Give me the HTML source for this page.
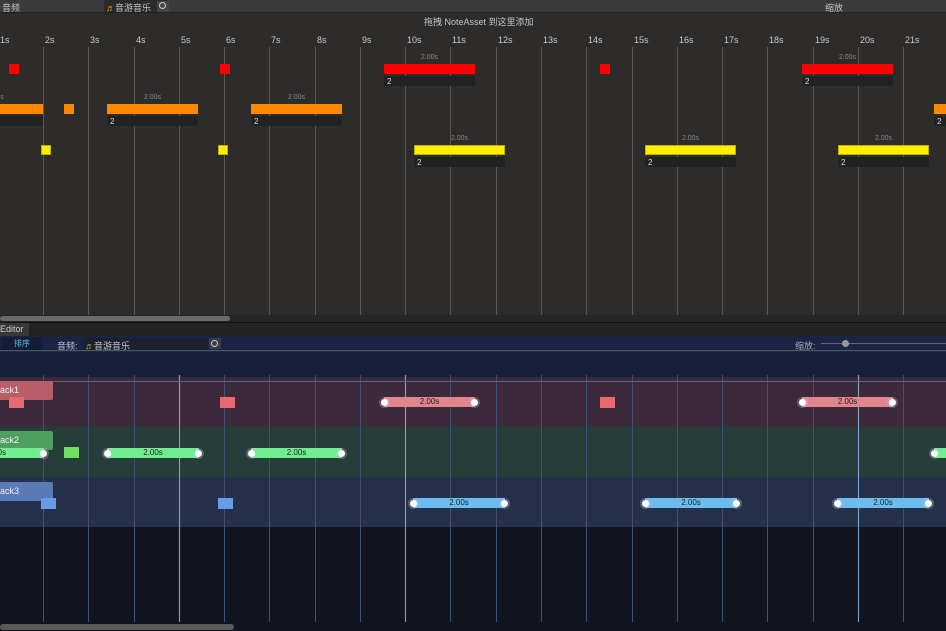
<!DOCTYPE html>
<html><head><meta charset="utf-8"><style>
*{margin:0;padding:0;box-sizing:border-box}
body{width:946px;height:631px;overflow:hidden;background:#2b2b2b;font-family:"Liberation Sans","Noto Sans CJK SC",sans-serif;position:relative;color:#c8c8c8}
.a{position:absolute}
.t{font-size:9px;color:#c4c4c4}
.lab{position:absolute;top:35px;font-size:9px;color:#c8c8c8}
.r{background:#ff0000}.o{background:#ff8800}.y{background:#ffee00;border:1px solid #bfb000}
.box{position:absolute;height:10px;background:#222;border-radius:2px;font-size:8px;color:#ddd;padding-left:3px;line-height:11px}
.d{position:absolute;font-size:7px;color:#888;text-align:center}
.bb{position:absolute;height:10px;border-radius:1px;font-size:8px;color:#222;text-align:center;line-height:10px}
.bb:before,.bb:after{content:"";position:absolute;top:1.5px;width:7px;height:7px;border-radius:50%;background:#fff;box-shadow:0 0 0 2px rgba(200,200,220,.3)}
.bb:before{left:-3px}.bb:after{right:-3px}
.tl{position:absolute;left:0;width:53px;height:19px;font-size:9px;color:#f0f0f0;line-height:19px;border-radius:0 2px 2px 0}
</style></head><body>
<div class="a" style="left:0;top:0;width:946px;height:13px;background:#3a3a3a;border-bottom:1px solid #222"></div>
<div class="a t" style="left:2px;top:1px">音频</div>
<div class="a" style="left:104px;top:0;width:64px;height:12px;background:#2a2a2a;border-radius:2px"></div>
<div class="a t" style="left:106px;top:1px"><span style="color:#e8b800">♬</span>音游音乐</div>
<div class="a" style="left:157px;top:1px;width:12px;height:11px;background:#444"></div>
<div class="a" style="left:159px;top:2px;width:7px;height:7px;border:1px solid #ccc;border-radius:50%"></div>
<div class="a t" style="left:825px;top:1px">缩放</div>
<div class="a" style="left:0;top:14px;width:946px;height:301px;background:#2e2c2b"></div>
<div class="a t" style="left:424px;top:15px">拖拽 NoteAsset 到这里添加</div>
<svg class="a" style="left:0;top:0" width="946" height="631">
<g stroke="#5a5856" stroke-width="1">
<path d="M43.5 47V315M88.5 47V315M134.5 47V315M179.5 47V315M224.5 47V315M269.5 47V315M315.5 47V315M360.5 47V315M405.5 47V315M450.5 47V315M496.5 47V315M541.5 47V315M586.5 47V315M632.5 47V315M677.5 47V315M722.5 47V315M767.5 47V315M813.5 47V315M858.5 47V315M903.5 47V315"/>
</g>
<g stroke="#3f5070" stroke-width="1">
<path d="M43.5 375V622M88.5 375V622M134.5 375V622M224.5 375V622M269.5 375V622M315.5 375V622M360.5 375V622M450.5 375V622M496.5 375V622M541.5 375V622M586.5 375V622M632.5 375V622M677.5 375V622M722.5 375V622M767.5 375V622M813.5 375V622M903.5 375V622"/>
</g>
<g stroke="#7d9cc4" stroke-width="1.2"><path d="M179.5 375V622M405.5 375V622M858.5 375V622"/></g>
</svg>
<div class="lab" style="left:0">1s</div><div class="lab" style="left:45px">2s</div><div class="lab" style="left:90px">3s</div><div class="lab" style="left:136px">4s</div><div class="lab" style="left:181px">5s</div><div class="lab" style="left:226px">6s</div><div class="lab" style="left:271px">7s</div><div class="lab" style="left:317px">8s</div><div class="lab" style="left:362px">9s</div><div class="lab" style="left:407px">10s</div><div class="lab" style="left:452px">11s</div><div class="lab" style="left:498px">12s</div><div class="lab" style="left:543px">13s</div><div class="lab" style="left:588px">14s</div><div class="lab" style="left:634px">15s</div><div class="lab" style="left:679px">16s</div><div class="lab" style="left:724px">17s</div><div class="lab" style="left:769px">18s</div><div class="lab" style="left:815px">19s</div><div class="lab" style="left:860px">20s</div><div class="lab" style="left:905px">21s</div>
<div class="a r" style="left:9px;top:64px;width:10px;height:10px"></div>
<div class="a r" style="left:220px;top:64px;width:10px;height:10px"></div>
<div class="a r" style="left:600px;top:64px;width:10px;height:10px"></div>
<div class="d" style="left:384px;top:54px;width:91px">2.00s</div><div class="a r" style="left:384px;top:64px;width:91px;height:10px"></div><div class="box" style="left:384px;top:76px;width:91px">2</div>
<div class="d" style="left:802px;top:54px;width:91px">2.00s</div><div class="a r" style="left:802px;top:64px;width:91px;height:10px"></div><div class="box" style="left:802px;top:76px;width:91px">2</div>
<div class="d" style="left:-10px;top:94px;width:20px">0s</div><div class="a o" style="left:0;top:104px;width:43px;height:10px"></div><div class="box" style="left:0;top:116px;width:43px"></div>
<div class="a o" style="left:64px;top:104px;width:10px;height:10px"></div>
<div class="d" style="left:107px;top:94px;width:91px">2.00s</div><div class="a o" style="left:107px;top:104px;width:91px;height:10px"></div><div class="box" style="left:107px;top:116px;width:91px">2</div>
<div class="d" style="left:251px;top:94px;width:91px">2.00s</div><div class="a o" style="left:251px;top:104px;width:91px;height:10px"></div><div class="box" style="left:251px;top:116px;width:91px">2</div>
<div class="a o" style="left:934px;top:104px;width:12px;height:10px"></div><div class="box" style="left:934px;top:116px;width:12px">2</div>
<div class="a y" style="left:41px;top:145px;width:10px;height:10px"></div>
<div class="a y" style="left:218px;top:145px;width:10px;height:10px"></div>
<div class="d" style="left:414px;top:135px;width:91px">2.00s</div><div class="a y" style="left:414px;top:145px;width:91px;height:10px"></div><div class="box" style="left:414px;top:157px;width:91px">2</div>
<div class="d" style="left:645px;top:135px;width:91px">2.00s</div><div class="a y" style="left:645px;top:145px;width:91px;height:10px"></div><div class="box" style="left:645px;top:157px;width:91px">2</div>
<div class="d" style="left:838px;top:135px;width:91px">2.00s</div><div class="a y" style="left:838px;top:145px;width:91px;height:10px"></div><div class="box" style="left:838px;top:157px;width:91px">2</div>
<div class="a" style="left:0;top:315px;width:946px;height:7px;background:#262626"></div>
<div class="a" style="left:0;top:316px;width:230px;height:5px;background:#6a6a6a;border-radius:3px"></div>
<div class="a" style="left:0;top:322px;width:946px;height:14px;background:#232323;border-top:1px solid #111"></div>
<div class="a" style="left:0;top:323px;width:29px;height:13px;background:#383838;font-size:9px;color:#ccc;padding-top:1px">Editor</div>
<div class="a" style="left:0;top:336px;width:946px;height:15px;background:#1b2445;border-bottom:1px solid #3a5a7a"></div>
<div class="a" style="left:2px;top:337px;width:40px;height:13px;background:#141c38;font-size:8px;color:#4fc8e0;text-align:center;line-height:13px">排序</div>
<div class="a t" style="left:57px;top:339px">音频:</div>
<div class="a" style="left:83px;top:338px;width:125px;height:12px;background:#1d2030"></div>
<div class="a t" style="left:85px;top:339px"><span style="color:#e8b800">♬</span>音游音乐</div>
<div class="a" style="left:209px;top:338px;width:12px;height:11px;background:#3a3d48"></div>
<div class="a" style="left:211px;top:340px;width:7px;height:7px;border:1px solid #ccc;border-radius:50%"></div>
<div class="a t" style="left:795px;top:339px;color:#aaa">缩放:</div>
<div class="a" style="left:821px;top:343px;width:125px;height:1px;background:#666"></div>
<div class="a" style="left:842px;top:340px;width:7px;height:7px;background:#999;border-radius:50%"></div>
<div class="a" style="left:0;top:352px;width:946px;height:25px;background:#16203a;z-index:-1"></div>
<div class="a" style="left:0;top:377px;width:946px;height:50px;background:#3c2a3c;z-index:-1"></div>
<div class="a" style="left:0;top:381px;width:946px;height:1px;background:#5a6a7a"></div>
<div class="a" style="left:0;top:427px;width:946px;height:50px;background:#263d3a;z-index:-1"></div>
<div class="a" style="left:0;top:477px;width:946px;height:50px;background:#25304a;z-index:-1"></div>
<div class="a" style="left:0;top:527px;width:946px;height:104px;background:#12141f;z-index:-1"></div>
<div class="tl" style="top:381px;background:#b85e68">ack1</div>
<div class="tl" style="top:431px;background:#4fa060">ack2</div>
<div class="tl" style="top:482px;background:#5a7ab8">ack3</div>
<div class="a" style="left:9px;top:397px;width:15px;height:11px;background:#e86a70"></div>
<div class="a" style="left:220px;top:397px;width:15px;height:11px;background:#e86a70"></div>
<div class="a" style="left:600px;top:397px;width:15px;height:11px;background:#e86a70"></div>
<div class="bb" style="left:384px;top:397px;width:91px;background:#e0848e">2.00s</div>
<div class="bb" style="left:802px;top:397px;width:91px;background:#e0848e">2.00s</div>
<div class="bb" style="left:-10px;top:448px;width:54px;background:#6fee8e;text-align:right;padding-right:38px">0s</div>
<div class="a" style="left:64px;top:447px;width:15px;height:11px;background:#6fe060"></div>
<div class="bb" style="left:107px;top:448px;width:92px;background:#6fee8e">2.00s</div>
<div class="bb" style="left:251px;top:448px;width:91px;background:#6fee8e">2.00s</div>
<div class="bb" style="left:934px;top:448px;width:30px;background:#6fee8e"></div>
<div class="a" style="left:41px;top:498px;width:15px;height:11px;background:#6a9ae8"></div>
<div class="a" style="left:218px;top:498px;width:15px;height:11px;background:#6a9ae8"></div>
<div class="bb" style="left:413px;top:498px;width:92px;background:#6cbcf0">2.00s</div>
<div class="bb" style="left:645px;top:498px;width:92px;background:#6cbcf0">2.00s</div>
<div class="bb" style="left:837px;top:498px;width:92px;background:#6cbcf0">2.00s</div>
<div class="a" style="left:0;top:624px;width:234px;height:6px;background:#5a5a5a;border-radius:3px"></div>
</body></html>
